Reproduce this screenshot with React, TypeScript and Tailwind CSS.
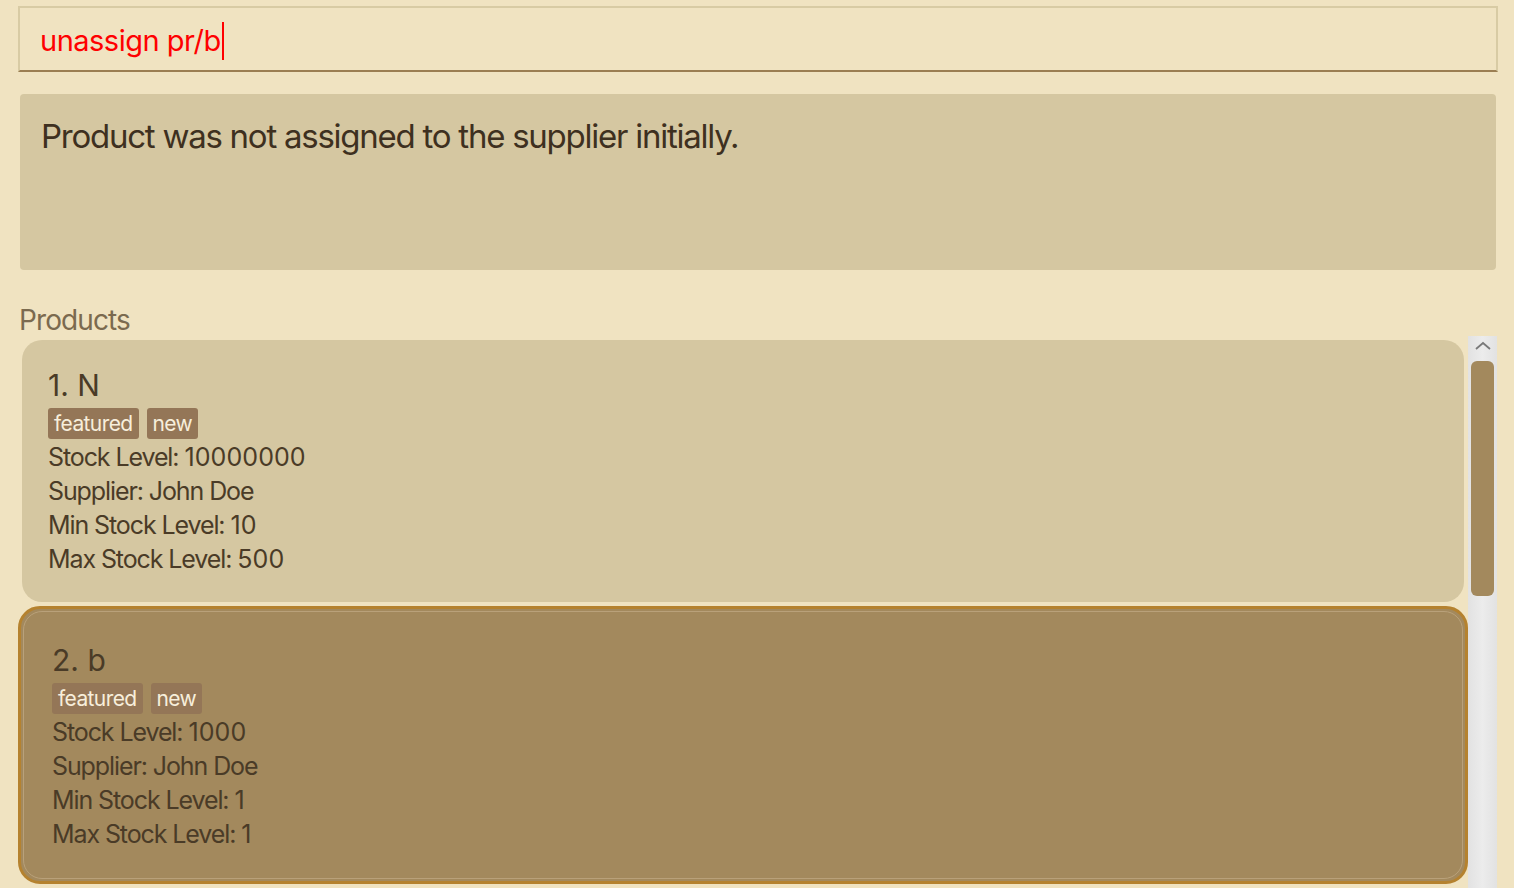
import React from "react";

type Product = {
  name: string;
  tags: string[];
  stock: string;
  supplier: string;
  min: string;
  max: string;
};

const products: Product[] = [
  { name: "N", tags: ["featured", "new"], stock: "10000000", supplier: "John Doe", min: "10", max: "500" },
  { name: "b", tags: ["featured", "new"], stock: "1000", supplier: "John Doe", min: "1", max: "1" },
];

function Field({ label, value }: { label: string; value: string }) {
  return (
    <div>
      <span className="tracking-[-1.1px]">{label}: </span>
      <span className="tracking-[0.1px]">{value}</span>
    </div>
  );
}

function ProductBody({ p, index }: { p: Product; index: number }) {
  return (
    <>
      <div className="text-[30px] leading-[38px] text-[#4a3b27]">
        {index + 1}. {p.name}
      </div>
      <div className="mt-[4px] flex gap-[8px]">
        {p.tags.map((t) => (
          <span
            key={t}
            className="h-[31px] rounded-[3px] bg-[#947657] px-[6px] text-[21px] leading-[31px] tracking-[-0.6px] text-[#f7eedb]"
          >
            {t}
          </span>
        ))}
      </div>
      <div className="mt-[1px] text-[25px] leading-[34px] text-[#4a3b27]">
        <Field label="Stock Level" value={p.stock} />
        <div className="tracking-[-1.1px]">Supplier: {p.supplier}</div>
        <Field label="Min Stock Level" value={p.min} />
        <Field label="Max Stock Level" value={p.max} />
      </div>
    </>
  );
}

export default function App() {
  return (
    <div
      className="h-[888px] w-full overflow-hidden bg-[#f0e3c1]"
      style={{ fontFamily: "Inter, 'Noto Sans', sans-serif" }}
    >
      {/* command box */}
      <div className="ml-[18px] mt-[6px] flex h-[66px] w-[1480px] items-center border-x-2 border-t-2 border-b-2 border-x-[#d8cba4] border-t-[#d8cba4] border-b-[#9b7e52] pl-[20px] pt-[3px]">
        <span className="text-[29px] tracking-[-0.5px] text-[#ff0000]">unassign pr/b</span>
        <span className="ml-[1px] h-[38px] w-[2px] bg-[#ff0000]" />
      </div>

      {/* result box */}
      <div className="ml-[20px] mt-[22px] h-[176px] w-[1476px] rounded-[4px] bg-[#d5c7a1] pl-[21px] pt-[22px]">
        <div className="text-[33px] leading-[40px] tracking-[-1.25px] text-[#3e3020]">
          Product was not assigned to the supplier initially.
        </div>
      </div>

      {/* list */}
      <div className="ml-[19px] mt-[33px] text-[28px] leading-[34px] tracking-[-0.9px] text-[#7b6a4f]">
        Products
      </div>
      <div className="ml-[18px] mt-[-1px] flex w-[1480px]">
        <div className="flex w-[1450px] flex-col">
          <div className="p-[4px]">
            <div className="h-[262px] rounded-[20px] bg-[#d5c7a1] pl-[26px] pt-[26px]">
              <ProductBody p={products[0]} index={0} />
            </div>
          </div>
          <div className="h-[278px] rounded-[22px] border-[3px] border-[#b5822f] bg-[#a3895d] p-[2px]">
            <div className="h-full rounded-[19px] border border-[#b9a17a] pl-[28px] pt-[29px]">
              <ProductBody p={products[1]} index={1} />
            </div>
          </div>
        </div>

        {/* scrollbar */}
        <div className="flex h-[560px] w-[29px] flex-col items-center bg-gradient-to-r from-[#e2e2e2] via-[#ececec] to-[#e2e2e2]">
          <svg width="18" height="12" viewBox="0 0 18 12" className="mt-[4px]">
            <path d="M2 9 L9 3 L16 9" fill="none" stroke="#7a7a7a" strokeWidth="1.8" />
          </svg>
          <div className="mt-[9px] h-[235px] w-[23px] rounded-[6px] bg-[#a3895d]" />
        </div>
      </div>
    </div>
  );
}
